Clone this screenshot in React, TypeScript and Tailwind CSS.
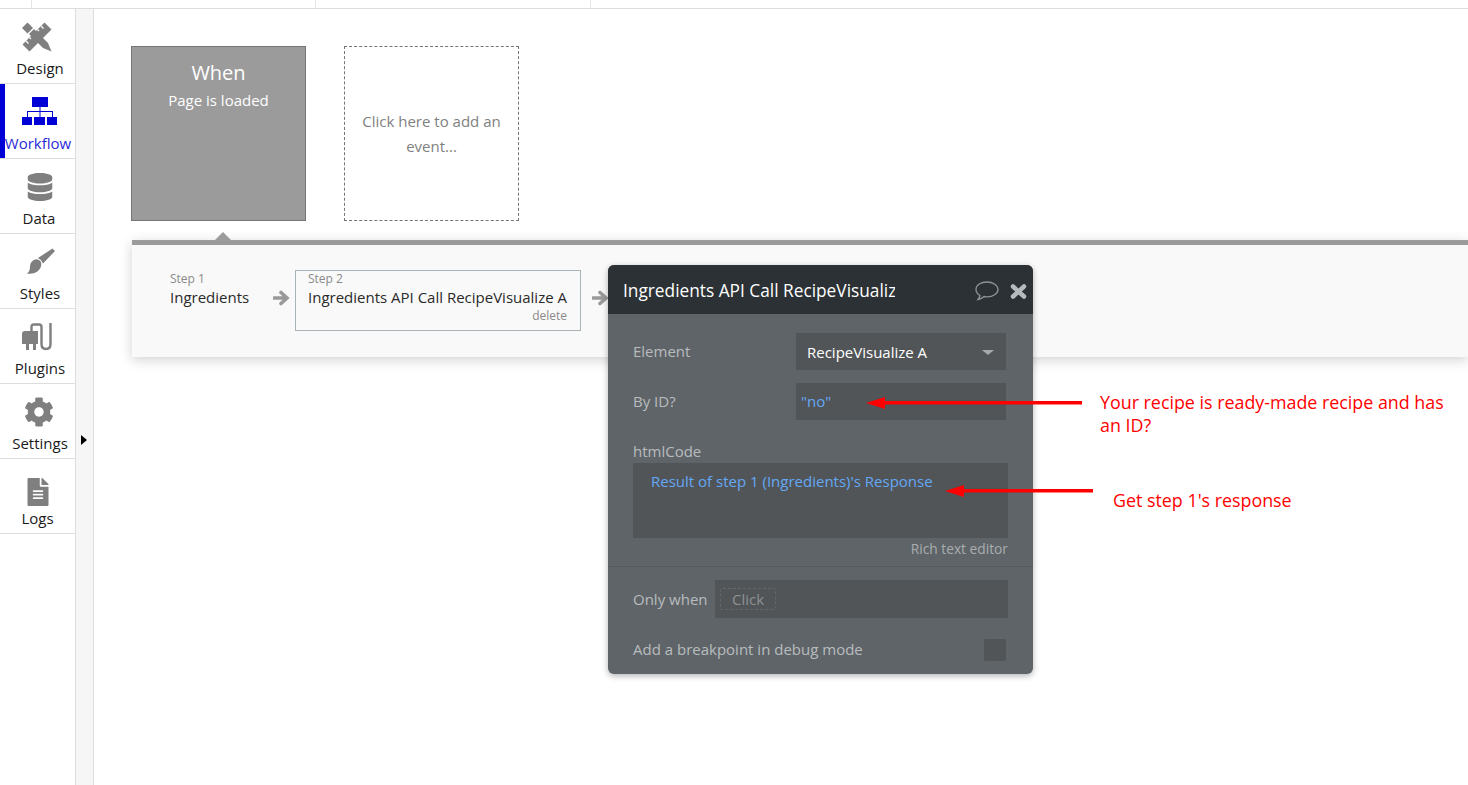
import { FaCog, FaDatabase, FaFileAlt } from "react-icons/fa";

function DesignIcon() {
  return (
    <svg width="30" height="30" viewBox="0 0 30 30" fill="#7f7f7f">
      <path d="M0 6 5.500 0.500 11 6 5.500 11.500z" />
      <path d="M22.500 0.500 29.500 7.500 7.500 29.500 0.500 22.500z" />
      <path d="M7 12 12 7 26 21 29.500 29.500 21 26z" />
      <path d="M19 4 21.500 6.500M15.500 7.500 17 9M4 19 6.500 21.500M7.500 15.500 9 17" stroke="#ffffff" strokeWidth="1.200" />
    </svg>
  );
}

function WorkflowIcon() {
  return (
    <svg width="36" height="30" viewBox="0 0 36 30" fill="#0000d6">
      <rect x="10" y="0" width="16" height="10" />
      <path d="M17.500 10h1v4H31v6h-1v-5H18.500v5h-1v-5H6v5H5v-6h12.500z" />
      <rect x="0" y="20" width="10" height="8" />
      <rect x="12" y="20" width="11" height="8" />
      <rect x="25" y="20" width="10" height="8" />
    </svg>
  );
}

function BrushIcon() {
  return (
    <svg width="28" height="27" viewBox="0 0 28 27" fill="#7f7f7f">
      <path d="M11 10 25.500 0.500 28 3 16 15.500Q14.500 11.500 11 10Z" />
      <path d="M8 11.500Q12 10.500 14 14Q15.500 19 10.500 23.500Q6 26.500 0 25.500Q3 23.500 3 18Q3.500 13 8 11.500Z" />
    </svg>
  );
}

function PlugIcon() {
  return (
    <svg width="32" height="29" viewBox="0 0 32 29" fill="#7f7f7f">
      <path d="M3 9h13v13H0V12a3 3 0 0 1 3-3z" />
      <rect x="4" y="22" width="3" height="6" />
      <rect x="11" y="22" width="3" height="6" />
      <path d="M9.500 10V5Q9.500 2.500 12 2.500H17Q19.500 2.500 19.500 5V22Q19.500 27 24 27Q28.500 27 28.500 22V1" fill="none" stroke="#7f7f7f" strokeWidth="2.400" />
    </svg>
  );
}

function StepArrow({ className }: { className: string }) {
  return (
    <svg width="17" height="16" viewBox="0 0 17 16" className={className}>
      <path d="M1 8h12M8 2.500 14 8l-6 5.500" fill="none" stroke="#999999" strokeWidth="3.600" strokeLinecap="round" />
    </svg>
  );
}

const navItems = [
  { label: "Design", icon: <DesignIcon />, iconClass: "pr-[1px]", labelClass: "pl-[5px]" },
  { label: "Workflow", icon: <WorkflowIcon />, active: true, iconClass: "pl-[5px]", labelClass: "pl-[1px]" },
  { label: "Data", icon: <FaDatabase size={28} />, iconClass: "pl-[5px]", labelClass: "pl-[3px]" },
  { label: "Styles", icon: <BrushIcon />, iconClass: "pl-[7px]", labelClass: "pl-[5px]" },
  { label: "Plugins", icon: <PlugIcon />, iconClass: "pl-[1px]", labelClass: "pl-[5px]" },
  { label: "Settings", icon: <FaCog size={30} />, iconClass: "pl-[3px]", labelClass: "pl-[5px]" },
  { label: "Logs", icon: <FaFileAlt size={28} />, iconClass: "pt-[16px]", labelClass: "" },
];

function Sidebar() {
  return (
    <div className="w-[76px] shrink-0 border-r border-[#dddddd] bg-white">
      {navItems.map((item) => (
        <div
          key={item.label}
          className={`relative flex h-[75px] flex-col items-center border-b border-[#dddddd] ${item.active ? "text-[#0000d6]" : "text-[#7f7f7f]"}`}
        >
          {item.active && <div className="absolute left-0 top-0 h-full w-[5px] bg-[#0000d6]" />}
          <div className={`flex h-[49px] items-center justify-center pt-[6px] ${item.iconClass}`}>{item.icon}</div>
          <span className={`text-[15px] leading-[20px] ${item.labelClass} ${item.active ? "text-[#2a2ad8]" : "text-[#1a1a1a]"}`}>{item.label}</span>
        </div>
      ))}
    </div>
  );
}

function Arrow({ x, y, w }: { x: number; y: number; w: number }) {
  return (
    <svg className="absolute" style={{ left: x, top: y }} width={w} height="14" viewBox={`0 0 ${w} 14`}>
      <path d={`M1 7 L20 1 L20 5 L${w - 1} 5 L${w - 1} 8.500 L20 8.500 L20 13 Z`} fill="#fe0000" />
    </svg>
  );
}

function EditorPanel() {
  return (
    <div className="absolute left-[608px] top-[265px] h-[409px] w-[425px] overflow-hidden rounded-[6px] bg-[#5f6468] shadow-[0_2px_6px_rgba(0,0,0,0.3)]">
      <div className="flex h-[49px] items-center bg-[#2b3134] pl-[15px]">
        <div className="w-[272px] overflow-hidden whitespace-nowrap pt-[2px] text-[17.300px] text-white">Ingredients API Call RecipeVisualize A</div>
        <svg width="24" height="20" viewBox="0 0 24 20" className="ml-[80px] mt-[3px]">
          <path d="M12 1C6 1 1 4 1 8.500c0 2.500 1.500 4.500 4 6-.3 1.500-1 2.700-2 4 2.500-.5 4.500-1.500 6-3 1 .2 2 .3 3 .3 6 0 11-3.200 11-7.300S18 1 12 1z" fill="none" stroke="#8d9396" strokeWidth="1.300" />
        </svg>
        <svg width="17" height="15" viewBox="0 0 17 15" className="ml-[11px] mt-[3px]">
          <path d="M3 2.500 14 12.500M14 2.500 3 12.500" stroke="#b6bbbe" strokeWidth="4.500" strokeLinecap="round" />
        </svg>
      </div>
      <div className="px-[25px] text-[15px] text-[#b8bcbe]">
        <div className="mt-[19px] flex h-[37px] items-center justify-between">
          <span>Element</span>
          <div className="mr-[2px] flex h-[37px] w-[210px] items-center justify-between bg-[#515558] pl-[11px] pr-[12px] pt-[1px] text-white">
            RecipeVisualize A
            <span className="h-0 w-0 border-x-[6px] border-t-[5px] border-x-transparent border-t-[#a5a9ab]" />
          </div>
        </div>
        <div className="mt-[13px] flex h-[37px] items-center justify-between">
          <span>By ID?</span>
          <div className="mr-[2px] flex h-[37px] w-[210px] items-center bg-[#515558] pl-[5px] text-[#64a8f5]">"no"</div>
        </div>
        <div className="mt-[20px] pb-[1px] leading-[22px]">htmlCode</div>
        <div className="h-[75px] bg-[#515558] pl-[18px] pt-[8px] leading-[21px] text-[#64a8f5]">Result of step 1 (Ingredients)'s Response</div>
        <div className="mt-[1px] text-right text-[13.750px] leading-[20px] text-[#a9adaf]">Rich text editor</div>
      </div>
      <div className="mt-[7px] border-t border-[#55595c] px-[25px] text-[15px] text-[#b8bcbe]">
        <div className="mt-[13px] flex items-center">
          <span className="w-[82px]">Only when</span>
          <div className="flex h-[38px] flex-1 items-center bg-[#515558] pl-[5px]">
            <span className="flex h-[22px] w-[56px] items-center justify-center rounded-[3px] border border-dashed border-[#63676a] text-[#8d9193]">Click</span>
          </div>
        </div>
        <div className="mt-[21px] flex items-center justify-between pr-[2px]">
          <span className="-mt-[2px]">Add a breakpoint in debug mode</span>
          <div className="h-[22px] w-[22px] rounded-[2px] bg-[#515558]" />
        </div>
      </div>
    </div>
  );
}

export default function App() {
  return (
    <div className="relative flex h-[785px] w-[1468px] flex-col overflow-hidden bg-white font-['Open_Sans',sans-serif]">
      <div className="flex h-[9px] shrink-0 border-b border-[#dddddd]">
        <div className="w-[32px] border-r border-[#e5e5e5]" />
        <div className="w-[284px] border-r border-[#e5e5e5]" />
        <div className="w-[275px] border-r border-[#e5e5e5]" />
      </div>
      <div className="flex flex-1">
        <Sidebar />
        <div className="relative w-[18px] shrink-0 border-r border-[#dddddd] bg-[#f6f6f6]">
          <span className="absolute left-[5px] top-[426px] h-0 w-0 border-y-[5px] border-l-[6px] border-y-transparent border-l-black" />
        </div>
        <div className="flex flex-1 flex-col pl-[37px] pt-[37px]">
          <div className="flex gap-[38px]">
            <div className="flex h-[175px] w-[175px] flex-col items-center border border-[#757575] bg-[#9b9b9b] pt-[12px] text-white">
              <span className="text-[20px] leading-[28px]">When</span>
              <span className="mt-[1px] text-[15px] leading-[24px]">Page is loaded</span>
            </div>
            <div className="flex h-[175px] w-[175px] items-center justify-center border border-dashed border-[#757575] px-[10px] text-center text-[15px] leading-[25px] text-[#7f7f7f]">
              Click here to add an event...
            </div>
          </div>
          <div className="relative ml-[1px] mt-[19px] h-[117px] border-t-[5px] border-[#9b9b9b] bg-[#f9f9f9] shadow-[0_3px_12px_rgba(0,0,0,0.18)]">
            <span className="absolute left-[83px] top-[-13px] h-0 w-0 border-x-[8px] border-b-[8px] border-x-transparent border-b-[#9b9b9b]" />
            <div className="flex items-start pl-[38px] pt-[25px]">
              <div className="w-[103px]">
                <div className="text-[12px] leading-[17px] text-[#8a8a8a]">Step 1</div>
                <div className="text-[15px] leading-[21px] text-[#2a2a2a]">Ingredients</div>
              </div>
              <StepArrow className="mt-[20px]" />
              <div className="ml-[5px] h-[61px] w-[286px] border border-[#aab4b8] pl-[12px] pr-[13px]">
                <div className="text-[12px] leading-[15px] text-[#8a8a8a]">Step 2</div>
                <div className="mt-[1px] whitespace-nowrap text-[15px] leading-[21px] text-[#2a2a2a]">Ingredients API Call RecipeVisualize A</div>
                <div className="-mt-[1px] text-right text-[12px] leading-[17px] text-[#8a8a8a]">delete</div>
              </div>
              <StepArrow className="ml-[11px] mt-[20px]" />
            </div>
          </div>
        </div>
      </div>
      <EditorPanel />
      <Arrow x={865} y={396} w={218} />
      <Arrow x={944} y={484} w={150} />
      <div className="absolute left-[1100px] top-[391px] w-[360px] text-[17.850px] leading-[23px] text-[#fe0000]">Your recipe is ready-made recipe and has an ID?</div>
      <div className="absolute left-[1113px] top-[488px] text-[17.850px] leading-[24px] text-[#fe0000]">Get step 1's response</div>
    </div>
  );
}
